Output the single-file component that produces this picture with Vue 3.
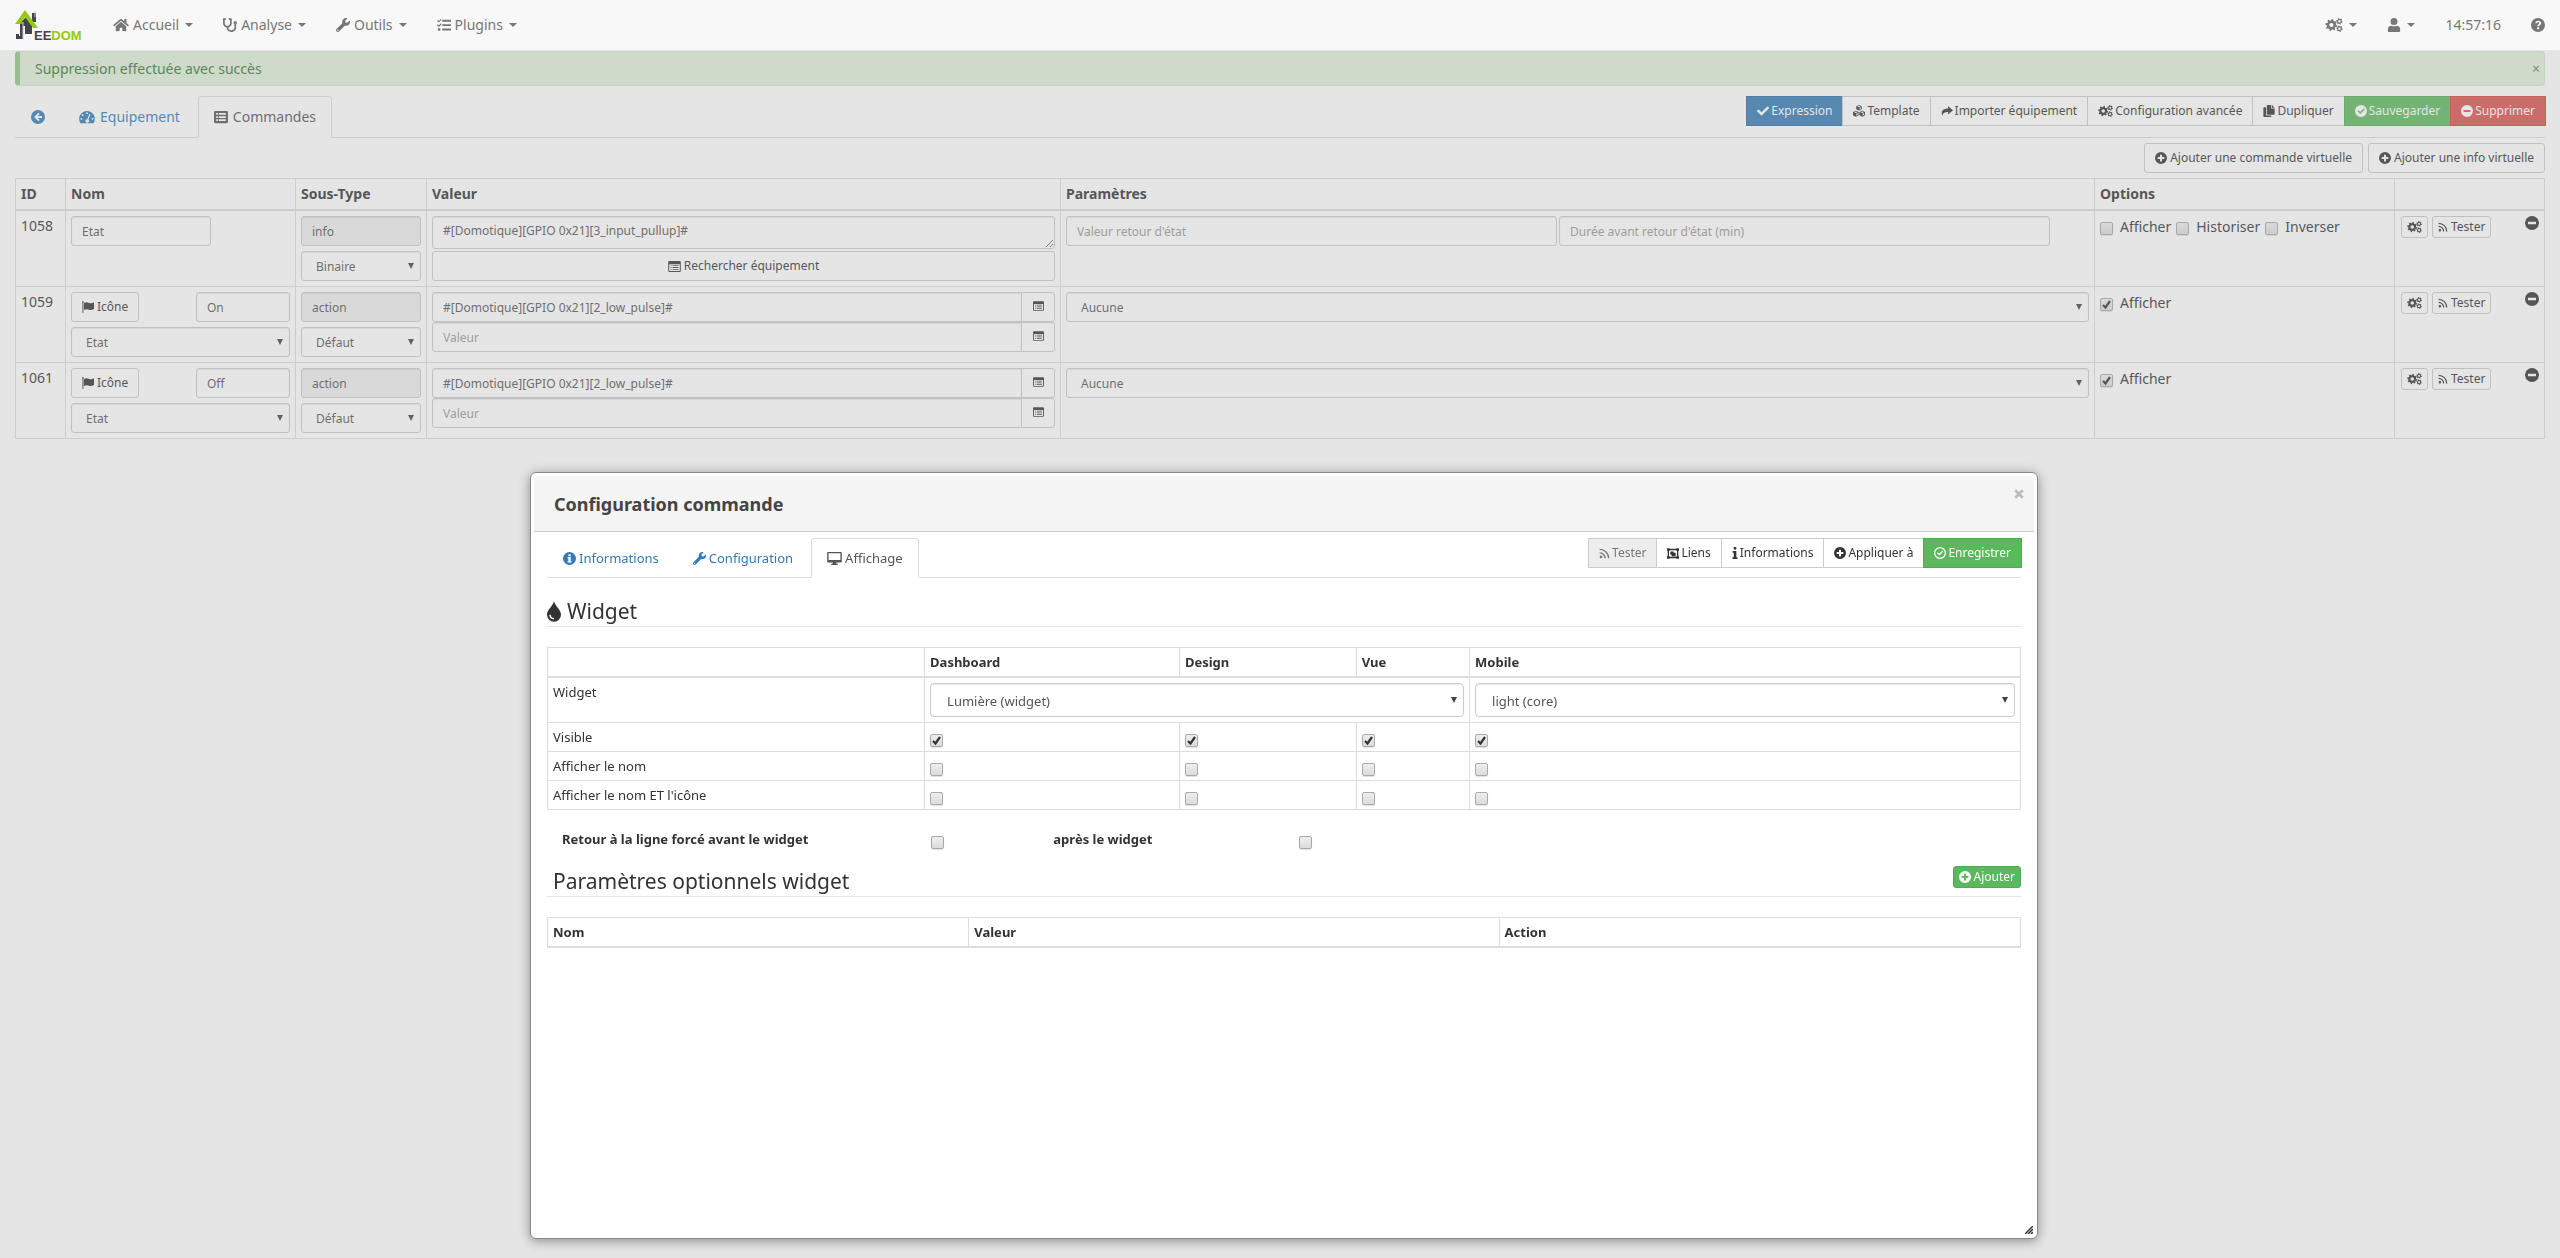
<script setup>
import { h } from 'vue'

function gear(cx, cy, r, teeth, hole) {
  const n = teeth * 4
  let d = ''
  for (let i = 0; i < n; i++) {
    const a = ((i + 0.5) / n) * Math.PI * 2
    const rad = i % 4 < 2 ? r : r * 0.74
    d += `${i ? 'L' : 'M'}${(cx + rad * Math.cos(a)).toFixed(2)} ${(cy + rad * Math.sin(a)).toFixed(2)}`
  }
  return `${d}Z M${cx - hole} ${cy}a${hole} ${hole} 0 1 0 ${hole * 2} 0a${hole} ${hole} 0 1 0 ${-hole * 2} 0Z`
}

const CHECK = 'M173.9 439.4l-166.4-166.4c-10-10-10-26.2 0-36.2l36.2-36.2c10-10 26.2-10 36.2 0L192 312.7 432.1 72.6c10-10 26.2-10 36.2 0l36.2 36.2c10 10 10 26.2 0 36.2l-294.4 294.4c-10 10-26.2 10-36.2 0z'
const DISC = 'M8 0a8 8 0 1 0 0 16a8 8 0 1 0 0-16Z'

const icons = {
  home: { w: 576, h: 512, d: 'M280.4 148.3L96 300.1V464a16 16 0 0 0 16 16l112-.3a16 16 0 0 0 16-16V368a16 16 0 0 1 16-16h64a16 16 0 0 1 16 16v95.6a16 16 0 0 0 16 16L464 480a16 16 0 0 0 16-16V300L295.7 148.3a12.2 12.2 0 0 0-15.3 0zM571.6 251.5L488 182.6V44a12 12 0 0 0-12-12h-56a12 12 0 0 0-12 12v72.6L318.5 43a48 48 0 0 0-61 0L4.3 251.5a12 12 0 0 0-1.6 16.9l25.5 31A12 12 0 0 0 45.2 301l235.2-193.7a12.2 12.2 0 0 1 15.3 0L530.9 301a12 12 0 0 0 16.9-1.6l25.5-31a12 12 0 0 0-1.7-16.9z' },
  stethoscope: { w: 512, h: 512, d: 'M447.1 112c-34.2.5-62.3 28.4-63 62.6-.5 24.3 12.5 45.6 32 56.8V344c0 57.3-50.2 104-112 104-60 0-109.2-44.1-111.9-99.2C265 333.8 320 269.2 320 192V36.6c0-11.4-8.1-21.3-19.3-23.5L237.8.5c-13-2.6-25.6 5.8-28.2 18.8L206.4 35c-2.6 13 5.8 25.6 18.8 28.2l30.7 6.1v121.4c0 52.9-42.2 96.7-95.1 97.2-53.4.5-96.9-42.7-96.9-96V69.4l30.7-6.1c13-2.6 21.4-15.2 18.8-28.2l-3.1-15.7C107.7 6.4 95.1-2 82.1.6L19.3 13C8.1 15.3 0 25.1 0 36.6V192c0 77.3 55.1 142 128.1 156.8C130.7 439.2 208.6 512 304 512c97 0 176-75.4 176-168V231.4c19.1-11.1 32-31.7 32-55.4 0-35.7-29.2-64.5-64.9-64zm.9 80c-8.8 0-16-7.2-16-16s7.2-16 16-16 16 7.2 16 16-7.2 16-16 16z' },
  wrench: { w: 512, h: 512, d: 'M507.7 109.1c-2.2-9-13.5-12.1-20.1-5.5l-74.4 74.4-67.9-11.3L334 98.8l74.4-74.4c6.6-6.6 3.4-17.9-5.7-20.2-47.4-11.7-99.6.9-136.6 37.9-39.6 39.6-50.6 97.1-34.1 147.2L18.7 402.8c-25 25-25 65.5 0 90.5s65.5 25 90.5 0l213.2-213.2c50.1 16.7 107.5 5.7 147.4-34.2 37.1-37.1 49.7-89.3 37.9-136.8zM64 472c-13.3 0-24-10.8-24-24s10.7-24 24-24 24 10.7 24 24-10.7 24-24 24z' },
  check: { w: 512, h: 512, d: CHECK },
  tasks: { w: 16, h: 16, d: 'M6 2h10v2.2H6ZM6 7h10v2.2H6ZM6 12h10v2.2H6ZM0 3.2l1-1 1.2 1.1L4.4 1l1 1-3.2 3.2ZM0 8.2l1-1 1.2 1.1L4.4 6l1 1-3.2 3.2ZM1 11.8h2.8v2.8H1Z' },
  cogs: { w: 20, h: 16, d: gear(7, 8, 6.9, 8, 2.4) + gear(16.2, 3.8, 3.7, 6, 1.4) + gear(16.2, 12.2, 3.7, 6, 1.4) },
  user: { w: 16, h: 16, d: 'M8 0a4 4 0 1 1 0 8a4 4 0 1 1 0-8ZM1 14.5V12.5C1 10.2 3 8.8 5 8.8c2 .8 4 .8 6 0 2 0 4 1.4 4 3.7v2c0 1-.5 1.5-1.5 1.5h-11C1.5 16 1 15.5 1 14.5Z' },
  question: { w: 16, h: 16, d: DISC + 'M4.8 5.9C5.2 3.9 6.5 3 8.2 3c2 0 3.4 1.2 3.4 2.9 0 2.2-2.4 2.3-2.4 3.5H7.1c0-2.2 2.3-2.5 2.3-3.5 0-.6-.5-1-1.3-1-.7 0-1.2.4-1.7 1.2ZM7 10.5h2.3v2.3H7Z' },
  left: { w: 16, h: 16, d: DISC + 'M8.6 3.2L3.5 8l5.1 4.8 1.4-1.4L7.7 9.2h5V6.8h-5L10 4.6Z' },
  tachometer: { w: 18, h: 16, d: 'M9 1a9 9 0 0 0-9 9c0 1.8.5 3.5 1.4 5h15.2c.9-1.5 1.4-3.2 1.4-5a9 9 0 0 0-9-9ZM9 2.5a1.1 1.1 0 1 1 0 2.2a1.1 1.1 0 1 1 0-2.2ZM4 4.7a1.1 1.1 0 1 1 0 2.2a1.1 1.1 0 1 1 0-2.2ZM2.6 9a1.1 1.1 0 1 1 0 2.2a1.1 1.1 0 1 1 0-2.2ZM15.4 9a1.1 1.1 0 1 1 0 2.2a1.1 1.1 0 1 1 0-2.2ZM11.7 4.5l1.2.4-2.3 6a2 2 0 1 1-1.3-.4Z' },
  list: { w: 16, h: 16, d: 'M0 2.5C0 1.5.5 1 1.5 1h13c1 0 1.5.5 1.5 1.5v11c0 1-.5 1.5-1.5 1.5h-13C.5 15 0 14.5 0 13.5ZM2.5 3.5v2h2v-2ZM5.5 3.5v2h8v-2ZM2.5 7v2h2V7ZM5.5 7v2h8V7ZM2.5 10.5v2h2v-2ZM5.5 10.5v2h8v-2Z' },
  listo: { w: 16, h: 14, d: 'M0 1.5C0 .5.5 0 1.5 0h13c1 0 1.5.5 1.5 1.5v11c0 1-.5 1.5-1.5 1.5h-13C.5 14 0 13.5 0 12.5ZM1.3 4v8.2c0 .3.2.5.5.5h12.4c.3 0 .5-.2.5-.5V4ZM3 5.3h1.3v1.1H3ZM5.5 5.3H13v1.1H5.5ZM3 7.7h1.3v1.1H3ZM5.5 7.7H13v1.1H5.5ZM3 10.1h1.3v1.1H3ZM5.5 10.1H13v1.1H5.5Z' },
  cubes: { w: 16, h: 16, d: 'M8 0l3.6 1.5v4.2L8 7.3 4.4 5.7V1.5ZM8 1.1L5.7 2 8 3l2.3-1ZM8.5 4v2l2-.9V3.1ZM3.8 7.6l3.7 1.6v4.6L3.8 15.5 0 13.8V9.2ZM3.8 8.7L1.5 9.7l2.3 1 2.3-1ZM4.3 11.8V14l2.1-1v-2.1ZM12.2 7.6L16 9.2v4.6l-3.8 1.7-3.7-1.7V9.2ZM12.2 8.7l-2.3 1 2.3 1 2.3-1ZM12.7 11.8V14l2.1-1v-2.1Z' },
  share: { w: 16, h: 16, d: 'M9.5 1.5L16 7l-6.5 5.5V9.3C5 9.3 2.5 10.3 2 14.5-.8 9.5 2 4.8 9.5 4.7Z' },
  copy: { w: 16, h: 16, d: 'M6 0h5v4.5h4.5V12c0 .6-.4 1-1 1H6c-.6 0-1-.4-1-1V1c0-.6.4-1 1-1ZM12 0l3.5 3.5H12ZM1.5 3H4v10.5c0 .3.2.5.5.5H11v1c0 .6-.4 1-1 1H1.5c-.6 0-1-.4-1-1V4c0-.6.4-1 1-1Z' },
  okdisc: { w: 16, h: 16, d: DISC + 'M3.3 8.4l1.5-1.5 2.2 2.2 4.6-4.6 1.5 1.5L7 12.1Z' },
  okring: { w: 16, h: 16, d: DISC + 'M8 1.7a6.3 6.3 0 1 1 0 12.6a6.3 6.3 0 1 1 0-12.6ZM3.9 8.2l1.3-1.3 1.9 1.9L11 4.9l1.3 1.3-5.2 5.2Z' },
  minus: { w: 16, h: 16, d: DISC + 'M3.4 6.7h9.2v2.6H3.4Z' },
  plus: { w: 16, h: 16, d: DISC + 'M6.7 3.5h2.6v3.2h3.2v2.6H9.3v3.2H6.7V9.3H3.5V6.7h3.2Z' },
  flag: { w: 16, h: 16, d: 'M1 0a1.3 1.3 0 0 1 .8 2.3V16H.6V2.3A1.3 1.3 0 0 1 1 0ZM2.5 2.8C5.5 1 7.8 1.8 9.5 2.6c2 .9 4 .6 6.5-.8v9c-2.5 1.5-4.7 1.7-6.8.8-2-.8-4-1-6.7.5Z' },
  rss: { w: 16, h: 16, d: 'M3 11a2 2 0 1 1 0 4a2 2 0 1 1 0-4ZM1 6a9 9 0 0 1 9 9H8A7 7 0 0 0 1 8ZM1 1a14 14 0 0 1 14 14h-2A12 12 0 0 0 1 3Z' },
  infodisc: { w: 16, h: 16, d: DISC + 'M6.7 2.7h2.8v2.4H6.7ZM5.7 6.3h3.8v5.1h1.1V13H5.5v-1.6h1.1V7.9h-.9Z' },
  info: { w: 8, h: 16, d: 'M2.3 0h3.4v3.4H2.3ZM.8 5.3h5v8.2h1.5V16H.7v-2.5h1.6V7.8H.8Z' },
  group: { w: 18, h: 16, d: 'M0 0h4v1h10V0h4v4h-1v8h1v4h-4v-1H4v1H0v-4h1V4H0ZM4 3v1H3v8h1v1h10v-1h1V4h-1V3ZM5 5h5v2h3v5H7v-2H5Z' },
  desktop: { w: 18, h: 16, d: 'M1.5 0h15c1 0 1.5.5 1.5 1.5v9.8c0 1-.5 1.5-1.5 1.5H11l.5 1.7H13V16H5v-1.5h1.5l.5-1.7H1.5c-1 0-1.5-.5-1.5-1.5V1.5C0 .5.5 0 1.5 0ZM1.7 1.6v8.3h14.6V1.6Z' },
  tint: { w: 11, h: 16, d: 'M5.5 0C6.5 4 11 6.5 11 10.6a5.5 5.4 0 0 1-11 0C0 6.5 4.5 4 5.5 0ZM1.8 10.5c0 2.2 1.4 3.7 3.7 3.7v-1.1c-1.5 0-2.5-1-2.5-2.6Z' },
  times: { w: 16, h: 16, d: 'M3.5.5L8 5 12.5.5l3 3L11 8l4.5 4.5-3 3L8 11l-4.5 4.5-3-3L5 8 .5 3.5Z' }
}

// Renders one glyph scaled to the requested height.
const Icon = ({ n, s = 12 }) => {
  const g = icons[n]
  return h('svg', { viewBox: `0 0 ${g.w} ${g.h}`, height: s, width: Math.round((s * g.w) / g.h), 'aria-hidden': 'true', class: 'icon' },
    [h('path', { d: g.d, fill: 'currentColor', 'fill-rule': 'evenodd' })])
}
Icon.props = ['n', 's']

const menus = [
  { icon: 'home', label: 'Accueil' },
  { icon: 'stethoscope', label: 'Analyse' },
  { icon: 'wrench', label: 'Outils' },
  { icon: 'tasks', label: 'Plugins' }
]
const actions = [
  { icon: 'check', label: 'Expression', kind: 'primary' },
  { icon: 'cubes', label: 'Template' },
  { icon: 'share', label: 'Importer équipement' },
  { icon: 'cogs', label: 'Configuration avancée' },
  { icon: 'copy', label: 'Dupliquer' },
  { icon: 'okdisc', label: 'Sauvegarder', kind: 'success' },
  { icon: 'minus', label: 'Supprimer', kind: 'danger' }
]
const modalActions = [
  { icon: 'rss', label: 'Tester', size: 11, disabled: true },
  { icon: 'group', label: 'Liens', size: 11 },
  { icon: 'info', label: 'Informations' },
  { icon: 'plus', label: 'Appliquer à' },
  { icon: 'okring', label: 'Enregistrer', kind: 'success' }
]
const commands = [
  { id: 1058, type: 'info', name: 'Etat', sub: 'Binaire', value: '#[Domotique][GPIO 0x21][3_input_pullup]#', options: ['Afficher', 'Historiser', 'Inverser'] },
  { id: 1059, type: 'action', name: 'On', sub: 'Défaut', value: '#[Domotique][GPIO 0x21][2_low_pulse]#', options: ['Afficher'] },
  { id: 1061, type: 'action', name: 'Off', sub: 'Défaut', value: '#[Domotique][GPIO 0x21][2_low_pulse]#', options: ['Afficher'] }
]
const views = ['Dashboard', 'Design', 'Vue', 'Mobile']
const visibility = [
  { label: 'Visible', on: true },
  { label: 'Afficher le nom', on: false },
  { label: "Afficher le nom ET l'icône", on: false }
]
</script>

<template>
  <div class="page">
    <header class="navbar">
      <a href="#" class="logo" aria-label="Jeedom">
        <svg viewBox="0 0 80 40" width="80" height="40">
          <path d="M17 4h4v9h-4zM5 14l6-6 6 8v9h-7v-8H6z" fill="#44444c" />
          <path d="M20 2v6" stroke="#c8c8cc" fill="none" />
          <path d="M5 15h3v15H1v-5h3v2h1z" fill="#44444c" />
          <path d="M8 13v17M5 14h3" stroke="#c8c8cc" fill="none" />
          <path d="M0 15L10 1l13 18h-5L10 8 5 15z" fill="#96c90f" />
          <text x="19" y="31" class="logo-text" fill="#44444c">EE<tspan fill="#96c90f">DOM</tspan></text>
        </svg>
      </a>
      <nav class="menu">
        <a v-for="m in menus" :key="m.label" href="#" class="menu-item">
          <Icon :n="m.icon" :s="14" /><span>{{ m.label }}</span><i class="caret"></i>
        </a>
      </nav>
      <nav class="menu menu-right">
        <a href="#" class="menu-item" aria-label="Réglages"><Icon n="cogs" :s="14" /><i class="caret"></i></a>
        <a href="#" class="menu-item" aria-label="Profil"><Icon n="user" :s="14" /><i class="caret"></i></a>
        <span class="menu-item">14:57:16</span>
        <a href="#" class="menu-item" aria-label="Aide"><Icon n="question" :s="14" /></a>
      </nav>
    </header>

    <main class="content">
      <div class="alert" role="alert">
        <span>Suppression effectuée avec succès</span>
        <button class="alert-close" aria-label="Fermer">×</button>
      </div>

      <div class="tabbar">
        <nav class="tabs">
          <a href="#" class="tab" aria-label="Retour"><Icon n="left" :s="14" /></a>
          <a href="#" class="tab"><Icon n="tachometer" :s="14" />Equipement</a>
          <a href="#" class="tab active"><Icon n="list" :s="14" />Commandes</a>
        </nav>
        <div class="group">
          <button v-for="a in actions" :key="a.label" class="btn" :class="a.kind"><Icon :n="a.icon" />{{ a.label }}</button>
        </div>
      </div>

      <div class="adders">
        <button class="btn round"><Icon n="plus" />Ajouter une commande virtuelle</button>
        <button class="btn round"><Icon n="plus" />Ajouter une info virtuelle</button>
      </div>

      <table class="grid commands">
        <colgroup>
          <col class="c-id" /><col class="c-name" /><col class="c-sub" /><col class="c-value" /><col /><col class="c-options" /><col class="c-tools" />
        </colgroup>
        <thead>
          <tr><th>ID</th><th>Nom</th><th>Sous-Type</th><th>Valeur</th><th>Paramètres</th><th>Options</th><th></th></tr>
        </thead>
        <tbody>
          <tr v-for="c in commands" :key="c.id">
            <td>{{ c.id }}</td>
            <td>
              <input v-if="c.type === 'info'" class="field name-info" :value="c.name" aria-label="Nom" />
              <div v-else class="stack">
                <div class="spread">
                  <button class="btn round"><Icon n="flag" />Icône</button>
                  <input class="field name-action" :value="c.name" aria-label="Nom" />
                </div>
                <select class="field" aria-label="Commande liée"><option>Etat</option></select>
              </div>
            </td>
            <td>
              <div class="stack">
                <input class="field" :value="c.type" disabled aria-label="Type" />
                <select class="field" aria-label="Sous-type"><option>{{ c.sub }}</option></select>
              </div>
            </td>
            <td>
              <div v-if="c.type === 'info'" class="stack tight">
                <textarea class="field" aria-label="Valeur" :value="c.value"></textarea>
                <button class="btn round"><Icon n="listo" :s="11" />Rechercher équipement</button>
              </div>
              <template v-else>
                <div class="addon">
                  <input class="field" :value="c.value" aria-label="Valeur" />
                  <button class="btn" aria-label="Rechercher"><Icon n="listo" :s="10" /></button>
                </div>
                <div class="addon">
                  <input class="field" placeholder="Valeur" aria-label="Valeur" />
                  <button class="btn" aria-label="Rechercher"><Icon n="listo" :s="10" /></button>
                </div>
              </template>
            </td>
            <td>
              <div v-if="c.type === 'info'" class="returns">
                <input class="field" placeholder="Valeur retour d'état" aria-label="Valeur retour d'état" />
                <input class="field" placeholder="Durée avant retour d'état (min)" aria-label="Durée avant retour d'état" />
              </div>
              <select v-else class="field" aria-label="Paramètres"><option>Aucune</option></select>
            </td>
            <td>
              <div class="options">
                <label v-for="o in c.options" :key="o"><input type="checkbox" :checked="c.type === 'action'" />{{ o }}</label>
              </div>
            </td>
            <td>
              <div class="tools">
                <button class="btn round small" aria-label="Configurer"><Icon n="cogs" /></button>
                <button class="btn round small"><Icon n="rss" :s="10" />Tester</button>
                <a href="#" class="remove" aria-label="Supprimer"><Icon n="minus" :s="14" /></a>
              </div>
            </td>
          </tr>
        </tbody>
      </table>
    </main>

    <div class="overlay"></div>

    <section class="dialog" role="dialog" aria-labelledby="dialog-title">
      <header class="dialog-head">
        <h1 id="dialog-title">Configuration commande</h1>
        <button class="dialog-close" aria-label="Fermer"><Icon n="times" :s="10" /></button>
      </header>
      <div class="dialog-body">
        <div class="tabbar">
          <nav class="tabs">
            <a href="#" class="tab"><Icon n="infodisc" :s="13" />Informations</a>
            <a href="#" class="tab"><Icon n="wrench" :s="13" />Configuration</a>
            <a href="#" class="tab active"><Icon n="desktop" :s="13" />Affichage</a>
          </nav>
          <div class="group">
            <button v-for="a in modalActions" :key="a.label" class="btn" :class="a.kind" :disabled="a.disabled"><Icon :n="a.icon" :s="a.size" />{{ a.label }}</button>
          </div>
        </div>

        <h2 class="legend first"><Icon n="tint" :s="21" />Widget</h2>
        <table class="grid">
          <colgroup><col class="w-label" /><col class="w-dash" /><col class="w-design" /><col class="w-vue" /><col /></colgroup>
          <thead>
            <tr><th></th><th v-for="v in views" :key="v">{{ v }}</th></tr>
          </thead>
          <tbody>
            <tr>
              <td>Widget</td>
              <td colspan="3"><select class="field large" aria-label="Widget dashboard"><option>Lumière (widget)</option></select></td>
              <td><select class="field large" aria-label="Widget mobile"><option>light (core)</option></select></td>
            </tr>
            <tr v-for="r in visibility" :key="r.label">
              <td>{{ r.label }}</td>
              <td v-for="v in views" :key="v"><input type="checkbox" class="cell-box" :checked="r.on" :aria-label="r.label + ' ' + v" /></td>
            </tr>
          </tbody>
        </table>

        <div class="breaks">
          <div><label for="before">Retour à la ligne forcé avant le widget</label></div>
          <div><input id="before" type="checkbox" class="cell-box" /></div>
          <div><label for="after">après le widget</label></div>
          <div><input id="after" type="checkbox" class="cell-box" /></div>
        </div>

        <h2 class="legend second">
          <span>Paramètres optionnels widget</span>
          <button class="btn round small success"><Icon n="plus" />Ajouter</button>
        </h2>
        <table class="grid">
          <colgroup><col class="p-name" /><col class="p-value" /><col /></colgroup>
          <thead><tr><th>Nom</th><th>Valeur</th><th>Action</th></tr></thead>
        </table>
      </div>
      <svg class="grip" viewBox="0 0 8 8" width="8" height="8" aria-hidden="true">
        <path d="M0 8L8 0M3 8L8 3M6 8L8 6" stroke="#333" stroke-width="1.5" />
      </svg>
    </section>
  </div>
</template>

<style>
body { background: #fff; }
.icon { flex: none; }
</style>

<style scoped>
.page { font: 14px/20px "Noto Sans", sans-serif; color: #333; min-height: 100vh; }
.page *, .page *::before { box-sizing: border-box; }
a { color: #337ab7; text-decoration: none; }
button, input, select, textarea { font-family: inherit; }

.navbar { position: relative; z-index: 2; display: flex; height: 51px; padding: 0 0 0 15px; background: #f8f8f8; border-bottom: 1px solid #e7e7e7; }
.logo { width: 83px; padding-top: 9px; line-height: 0; }
.logo-text { font: bold 13px "Liberation Sans", sans-serif; }
.menu { display: flex; }
.menu-right { margin-left: auto; }
.menu-item { display: flex; align-items: center; gap: 4px; padding: 0 15px; color: #777; }
.caret { border: 4px solid transparent; border-top-color: currentColor; border-bottom: 0; margin-left: 2px; }

.content { padding: 0 15px; }
.alert { display: flex; align-items: center; justify-content: space-between; height: 35px; padding: 0 4px 0 15px; background: #dff0d8; border: 1px solid #d6e9c6; border-left: 5px solid #92c882; border-radius: 4px; color: #3c763d; }
.alert-close { border: 0; background: none; padding: 0; color: #777; font-size: 14px; }

.tabbar { display: flex; justify-content: space-between; align-items: flex-start; border-bottom: 1px solid #ddd; }
.content > .tabbar { margin-top: 10px; }
.tabs { display: flex; gap: 2px; margin-bottom: -1px; }
.tab { display: flex; align-items: center; gap: 5px; padding: 10px 15px; border: 1px solid transparent; min-height: 42px; }
.tab.active { color: #555; background: #fff; border-color: #ddd; border-bottom-color: #fff; border-radius: 4px 4px 0 0; }

.btn { display: inline-flex; align-items: center; justify-content: center; gap: 3px; height: 30px; padding: 0 10px; border: 1px solid #ccc; background: #fff; color: #333; font-size: 12px; line-height: 18px; white-space: nowrap; }
.btn.round { border-radius: 3px; }
.btn.small { height: 22px; padding: 0 5px; }
.btn:disabled { background: #ededed; color: #777; }
.btn.primary { background: #337ab7; border-color: #2e6da4; color: #fff; }
.btn.success { background: #5cb85c; border-color: #4cae4c; color: #fff; }
.btn.danger { background: #d9534f; border-color: #d43f3a; color: #fff; }
.group { display: flex; margin-right: -1px; }
.group .btn { gap: 2px; }
.group .btn + .btn { margin-left: -1px; }
.adders { display: flex; justify-content: flex-end; gap: 5px; padding: 5px 0; }

.grid { width: 100%; table-layout: fixed; border-collapse: collapse; }
.grid th, .grid td { border: 1px solid #ddd; padding: 5px; text-align: left; vertical-align: top; }
.grid th { border-bottom-width: 2px; font-weight: bold; }
.commands th { height: 30px; }
.c-id { width: 50px; }
.c-name { width: 230px; }
.c-sub { width: 131px; }
.c-value { width: 634px; }
.c-options { width: 300px; }
.c-tools { width: 150px; }

.field { display: block; width: 100%; height: 30px; padding: 5px 10px; border: 1px solid #ccc; border-radius: 3px; background-color: #fff; color: #555; font-size: 12px; line-height: 18px; box-shadow: inset 0 1px 1px rgba(0, 0, 0, 0.08); }
.field::placeholder { color: #999; opacity: 1; }
.field:disabled { background-color: #eee; }
textarea.field { height: 33px; }
select.field { appearance: none; padding: 6px 14px 4px; background-image: url("data:image/svg+xml,%3Csvg xmlns='http://www.w3.org/2000/svg' width='6' height='6'%3E%3Cpath d='M0 0h6L3 6z' fill='%23444'/%3E%3C/svg%3E"); background-repeat: no-repeat; background-position: right 6px center; }
.field.large { height: 34px; padding: 8px 16px 6px; border-radius: 4px; font-size: 13px; }
.name-info { width: 140px; }
.name-action { width: 94px; }
.stack { display: flex; flex-direction: column; gap: 5px; }
.stack.tight { gap: 2px; }
.spread { display: flex; justify-content: space-between; }
.addon { display: flex; }
.addon .field { flex: 1; border-radius: 3px 0 0 3px; }
.addon .btn { width: 34px; padding: 0 0 2px; margin-left: -1px; border-radius: 0 3px 3px 0; }
.returns { display: flex; gap: 2px; }
.returns .field { width: 48%; }
.options { display: flex; gap: 5px; padding-top: 1px; }
.options label { display: flex; align-items: center; gap: 7px; }
.tools { display: flex; gap: 4px; padding-left: 1px; }
.remove { margin-left: auto; color: #333; line-height: 0; }

input[type="checkbox"] { appearance: none; flex: none; width: 13px; height: 13px; margin: 2px 0 0; border: 1px solid #aaa; border-radius: 2px; background: linear-gradient(#eee, #dcdcdc); box-shadow: 0 1px 1px rgba(0, 0, 0, 0.12); }
input[type="checkbox"]:checked { background: url("data:image/svg+xml,%3Csvg xmlns='http://www.w3.org/2000/svg' width='11' height='11'%3E%3Cpath d='M2 6l2.5 2.5L9 2' fill='none' stroke='%23333' stroke-width='2.2'/%3E%3C/svg%3E") center no-repeat, linear-gradient(#eee, #dcdcdc); }
input[type="checkbox"].cell-box { display: block; margin: 6px 0 -1px; }

.overlay { position: fixed; inset: 0; z-index: 1; background: rgba(170, 170, 170, 0.3); }

.dialog { position: fixed; z-index: 3; left: 530px; right: 522px; top: 472px; bottom: 19px; padding: 3px; background: #fff; border: 1px solid #888; border-radius: 6px; box-shadow: 0 2px 12px rgba(0, 0, 0, 0.4); font-size: 13px; line-height: 18px; }
.dialog-head { display: flex; justify-content: space-between; align-items: center; height: 56px; padding: 0 10px 0 20px; background: #f4f4f4; border-bottom: 1px solid #ccc; border-radius: 4px 4px 0 0; }
.dialog-head h1 { margin: 0; font-size: 18px; line-height: 24px; color: #444; }
.dialog-close { align-self: flex-start; margin-top: 13px; padding: 0; border: 0; background: none; color: #bbb; line-height: 0; }
.dialog-body { padding: 6px 13px; }
.dialog .tab { min-height: 40px; gap: 3px; }
.legend { display: flex; align-items: center; margin: 0 0 20px; border-bottom: 1px solid #e5e5e5; font-size: 21px; font-weight: normal; line-height: 30px; }
.legend.first { gap: 6px; margin-top: 18px; }
.legend.second { justify-content: space-between; align-items: flex-start; margin-top: 18px; padding-left: 6px; }
.w-label { width: 25.6%; }
.w-dash { width: 17.3%; }
.w-design { width: 12%; }
.w-vue { width: 7.7%; }
.p-name { width: 28.6%; }
.p-value { width: 36%; }
.breaks { display: grid; grid-template-columns: 3fr 1fr 2fr 6fr; margin-top: 20px; }
.breaks > div { padding-left: 15px; }
.breaks label { font-weight: bold; }
.grip { position: absolute; right: 4px; bottom: 4px; }
</style>
